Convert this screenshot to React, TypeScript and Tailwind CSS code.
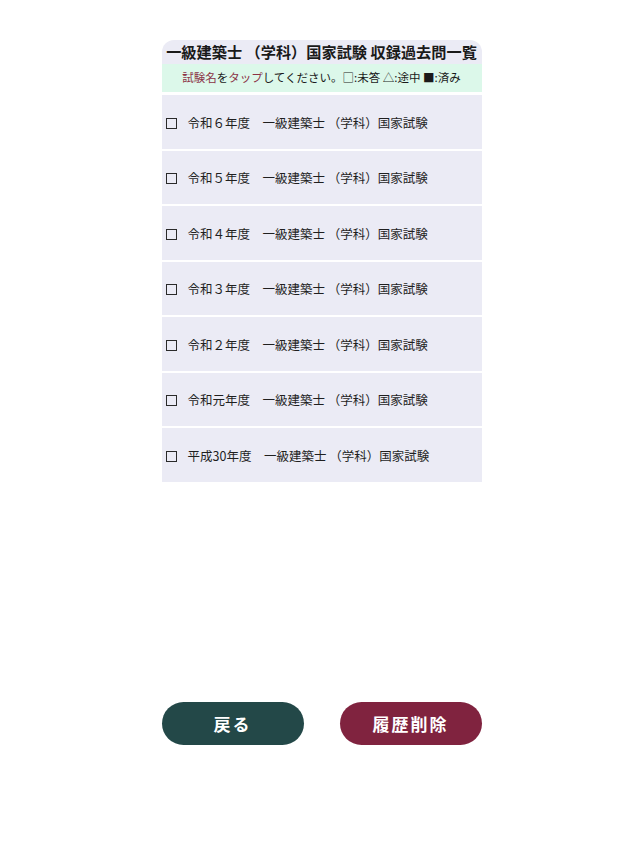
const exams = [
  "令和６年度",
  "令和５年度",
  "令和４年度",
  "令和３年度",
  "令和２年度",
  "令和元年度",
  "平成30年度",
];

export default function App() {
  return (
    <div
      className="min-h-screen bg-white text-[#1a1a1a]"
      style={{ fontFamily: '"Noto Sans CJK JP", "Noto Sans", sans-serif' }}
    >
      <div className="mx-auto w-[320px] pt-[40px]">
        {/* Header */}
        <div className="rounded-t-[12px] bg-[#ebebf5] h-[24px] flex items-center justify-center overflow-hidden">
          <h1 className="text-[15.2px] font-bold whitespace-nowrap leading-none">
            一級建築士 （学科）国家試験 収録過去問一覧
          </h1>
        </div>
        <div className="bg-[#dcf8ea] h-[28px] flex items-center justify-center text-[11.5px] whitespace-nowrap">
          <span className="text-[#8b3346]">試験名</span>
          <span>を</span>
          <span className="text-[#8b3346]">タップ</span>
          <span>してください。□:未答 △:途中 ■:済み</span>
        </div>

        {/* Exam list */}
        <div className="mt-[3px] flex flex-col gap-[2px]">
          {exams.map((year) => (
            <button
              key={year}
              className="h-[53.5px] w-full bg-[#ebebf5] flex items-center gap-[11px] pl-[4px] pt-[3px] text-left text-[12.5px] text-[#1f1f1f]"
            >
              <span className="w-[11px] h-[11px] border-[1.5px] border-[#2a2a2a] shrink-0" />
              <span>
                {year}　一級建築士 （学科）国家試験
              </span>
            </button>
          ))}
        </div>

        {/* Actions */}
        <div className="mt-[220.5px] flex justify-between">
          <button className="w-[142px] h-[43px] rounded-full bg-[#234848] text-white font-bold text-[17px] tracking-[2px]">
            戻る
          </button>
          <button className="w-[142px] h-[43px] rounded-full bg-[#80233f] text-white font-bold text-[17px] tracking-[2px]">
            履歴削除
          </button>
        </div>
      </div>
    </div>
  );
}
